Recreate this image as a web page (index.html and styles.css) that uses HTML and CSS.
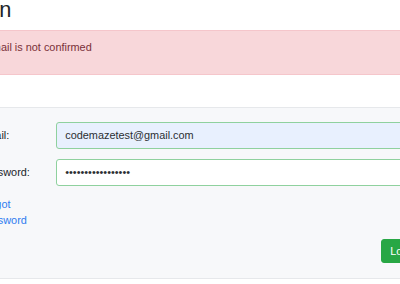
FILE: index.html
```html
<!DOCTYPE html>
<html lang="en">
  <head>
    <meta charset="UTF-8" />
    <meta name="viewport" content="width=device-width, initial-scale=1.0" />
    <title>Login</title>
    <link rel="stylesheet" href="styles.css">
  </head>
  <body>
    <main class="page">
      <h1 class="title">Login</h1>
      <div class="alert">
        <ul class="alert__list">
          <li>Email is not confirmed</li>
        </ul>
      </div>
      <form class="card">
        <div class="form-row">
          <label class="form-row__label" for="email">Email:</label>
          <input class="form-row__input form-row__input--filled" type="email" id="email" value="codemazetest@gmail.com" />
        </div>
        <div class="form-row">
          <label class="form-row__label" for="password">Password:</label>
          <input class="form-row__input" type="password" id="password" value="codemazetest12345" />
        </div>
        <div class="form-row">
          <a href="#" class="form-row__link">Forgot Password</a>
        </div>
        <div class="form-row form-row--end">
          <button type="submit" class="btn">Login</button>
        </div>
      </form>
    </main>
  </body>
</html>
```

FILE: styles.css
```css
* {
  margin: 0;
  padding: 0;
  box-sizing: border-box;
  font-family: "Liberation Sans", Arial, sans-serif;
}
body {
  background-color: #fff;
  color: #212529;
  font-size: 10.9px;
  line-height: 1.5;
  overflow: hidden;
}
.page {
  width: 495px;
  margin-left: -45px;
}
.title {
  font-size: 21.8px;
  font-weight: 500;
  line-height: 1.2;
  margin: -3px 0 6.4px 3px;
}
.alert {
  background-color: #f8d7da;
  border: 1px solid #f5c6cb;
  color: #7a3038;
  padding: 8px 13.6px;
  margin-bottom: 32.5px;
}
.alert__list {
  padding-left: 15px;
  margin-bottom: 10.6px;
}
.card {
  background-color: #f7f8fa;
  border-top: 1px solid #e6e8eb;
  border-bottom: 1px solid #e6e8eb;
  padding: 13.6px 24px 14.4px;
}
.form-row {
  display: grid;
  grid-template-columns: 67px 1fr;
  gap: 10px;
  align-items: start;
  margin-bottom: 10.2px;
}
.form-row:last-child {
  margin-bottom: 0;
}
.form-row__label {
  padding-top: 5.2px;
  line-height: 16.35px;
}
.form-row__input {
  height: 27px;
  border: 1px solid #8fd19e;
  border-radius: 3px;
  padding: 0 8.2px;
  font-size: 10.9px;
  color: #2b2f33;
  background-color: #fff;
  outline: none;
}
.form-row__input--filled {
  background-color: #e8f0fe;
}
.form-row__link {
  color: #2f7df0;
  text-decoration: none;
  line-height: 16.35px;
}
.form-row--end {
  display: flex;
  justify-content: flex-end;
}
.btn {
  height: 24.5px;
  padding: 0 8.2px;
  border: 1px solid #28a745;
  border-radius: 3px;
  background-color: #28a745;
  color: #fff;
  font-size: 10.9px;
}
```
